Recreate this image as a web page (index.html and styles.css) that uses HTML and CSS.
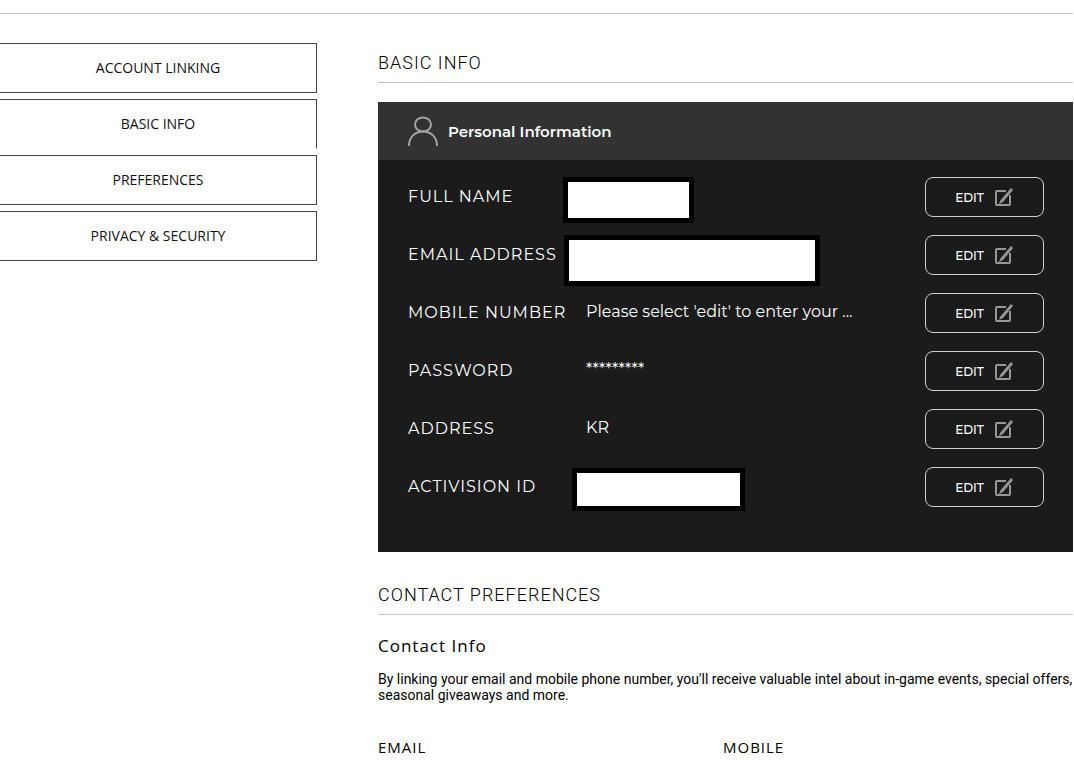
FILE: index.html
```html
<!DOCTYPE html>
<html lang="en">
<head>
    <meta charset="UTF-8">
    <meta name="viewport" content="width=device-width, initial-scale=1.0">
    <title>Basic Info</title>
    <link rel="stylesheet" href="styles.css">
</head>
<body>
    <svg class="sprite" aria-hidden="true">
        <symbol id="icon-edit" viewBox="0 0 20 18">
            <path d="M12 3H3Q2 3 2 4V16Q2 17 3 17H15Q16 17 16 16V7" fill="none" stroke="#979797" stroke-width="2"/>
            <path d="M17 0L19 2L9 14L5 16L6.400 12.500Z" fill="#979797"/>
        </symbol>
    </svg>

    <div class="topbar"></div>

    <div class="layout">
        <nav class="side-nav">
            <a href="#linking">ACCOUNT LINKING</a>
            <a href="#basic" class="active">BASIC INFO</a>
            <a href="#preferences">PREFERENCES</a>
            <a href="#privacy">PRIVACY &amp; SECURITY</a>
        </nav>

        <main class="content">
            <h2 class="section-title" id="basic">BASIC INFO</h2>

            <section class="card">
                <header class="card-header">
                    <svg class="user-icon" viewBox="0 0 30 30" fill="none" stroke="#a3a3a3" stroke-width="2" aria-hidden="true">
                        <ellipse cx="15" cy="8.500" rx="8" ry="7"/>
                        <path d="M1 30C1 21 7 15.500 15 15.500S29 21 29 30"/>
                    </svg>
                    <h3>Personal Information</h3>
                </header>

                <div class="card-body">
                    <div class="row">
                        <span class="label">FULL NAME</span>
                        <span class="value"><span class="mask mask-name"></span></span>
                        <button type="button" class="edit-btn">EDIT <svg class="edit-icon"><use href="#icon-edit"/></svg></button>
                    </div>
                    <div class="row">
                        <span class="label">EMAIL ADDRESS</span>
                        <span class="value"><span class="mask mask-email"></span></span>
                        <button type="button" class="edit-btn">EDIT <svg class="edit-icon"><use href="#icon-edit"/></svg></button>
                    </div>
                    <div class="row">
                        <span class="label">MOBILE NUMBER</span>
                        <span class="value">Please select 'edit' to enter your ...</span>
                        <button type="button" class="edit-btn">EDIT <svg class="edit-icon"><use href="#icon-edit"/></svg></button>
                    </div>
                    <div class="row">
                        <span class="label">PASSWORD</span>
                        <span class="value">*********</span>
                        <button type="button" class="edit-btn">EDIT <svg class="edit-icon"><use href="#icon-edit"/></svg></button>
                    </div>
                    <div class="row">
                        <span class="label">ADDRESS</span>
                        <span class="value">KR</span>
                        <button type="button" class="edit-btn">EDIT <svg class="edit-icon"><use href="#icon-edit"/></svg></button>
                    </div>
                    <div class="row">
                        <span class="label">ACTIVISION ID</span>
                        <span class="value"><span class="mask mask-id"></span></span>
                        <button type="button" class="edit-btn">EDIT <svg class="edit-icon"><use href="#icon-edit"/></svg></button>
                    </div>
                </div>
            </section>

            <h2 class="section-title" id="preferences">CONTACT PREFERENCES</h2>

            <section class="contact">
                <h3>Contact Info</h3>
                <p>By linking your email and mobile phone number, you'll receive valuable intel about in-game events, special offers, seasonal giveaways and more.</p>
                <div class="contact-columns">
                    <h4>EMAIL</h4>
                    <h4>MOBILE</h4>
                </div>
            </section>
        </main>
    </div>
</body>
</html>
```

FILE: styles.css
```css
* {
    box-sizing: border-box;
}

body {
    margin: 0;
    padding-right: 1px;
    background: #fff;
    color: #000;
    font-family: "Open Sans", sans-serif;
}

h2, h3, h4, p {
    margin: 0;
    font-weight: 400;
}

.sprite {
    display: none;
}

.topbar {
    height: 14px;
    border-bottom: 1px solid #c3c3c3;
}

/* Two column layout */
.layout {
    display: grid;
    grid-template-columns: 317fr 695fr;
    gap: 61px;
    padding-top: 29px;
}

/* Left navigation */
.side-nav {
    display: flex;
    flex-direction: column;
    gap: 6px;
}

.side-nav a {
    height: 50px;
    border: 1px solid #444;
    border-left: none;
    color: #111;
    font-size: 14px;
    line-height: 48px;
    text-align: center;
    text-decoration: none;
}

.side-nav a.active {
    border-bottom-color: transparent;
}

/* Section headings */
.section-title {
    height: 40px;
    border-bottom: 1px solid #c3c3c3;
    font-family: Roboto, sans-serif;
    font-size: 18px;
    font-weight: 300;
    line-height: 40px;
    letter-spacing: 1px;
}

/* Personal information card */
.card {
    margin: 19px 0 23px;
    background: #1b1b1b;
    color: #fff;
    font-family: Montserrat, Inter, sans-serif;
}

.card-header {
    display: flex;
    align-items: center;
    gap: 10px;
    height: 58px;
    padding: 0 30px;
    background: #323232;
}

.card-header h3 {
    font-size: 15px;
    font-weight: 600;
}

.user-icon {
    width: 30px;
    height: 30px;
}

.card-body {
    display: flex;
    flex-direction: column;
    gap: 18px;
    padding: 17px 29px 45px 30px;
}

.row {
    display: grid;
    grid-template-columns: 178px 1fr 119px;
    align-items: center;
    height: 40px;
}

.label {
    font-size: 16px;
    line-height: 20px;
    letter-spacing: 1px;
}

.value {
    position: relative;
    align-self: stretch;
    font-size: 16px;
    line-height: 38px;
}

/* Boxes laid over the private values */
.mask {
    position: absolute;
    border: 5px solid #000;
    background: #fff;
}

.mask-name {
    top: 0;
    left: -23px;
    width: 131px;
    height: 46px;
}

.mask-email {
    top: 0;
    left: -22px;
    width: 256px;
    height: 51px;
}

.mask-id {
    top: 1px;
    left: -14px;
    width: 173px;
    height: 43px;
}

.edit-btn {
    display: flex;
    align-items: center;
    justify-content: center;
    gap: 10px;
    height: 40px;
    padding: 0;
    border: 1px solid #d0d0d0;
    border-radius: 8px;
    background: transparent;
    color: #fff;
    font-family: inherit;
    font-size: 12px;
    font-weight: 500;
    cursor: pointer;
}

.edit-icon {
    width: 20px;
    height: 18px;
}

/* Contact preferences */
.contact {
    padding: 19px 0 12px;
}

.contact h3 {
    font-size: 17px;
    line-height: 24px;
    letter-spacing: 1px;
}

.contact p {
    margin: 13px 0 32px;
    font-family: Roboto, sans-serif;
    font-size: 14px;
    line-height: 16px;
}

.contact-columns {
    display: grid;
    grid-template-columns: 1fr 1fr;
    padding-right: 5px;
}

.contact h4 {
    font-size: 15px;
    line-height: 24px;
    letter-spacing: 1px;
}
```
